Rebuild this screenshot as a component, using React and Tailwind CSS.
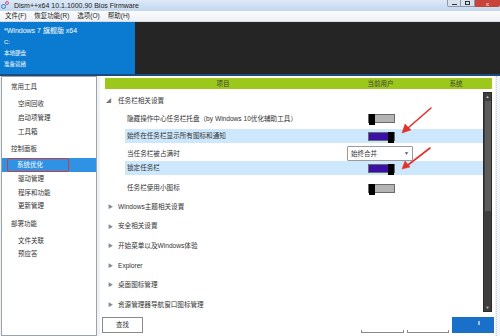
import React from "react";

const font = "font-['Liberation_Sans','Noto_Sans_CJK_SC',sans-serif]";

const Toggle = ({ on }) => (
  <div
    className={`flex h-[9px] w-[27px] border border-[#6a6a6a] ${
      on ? "justify-end bg-[#3a10a6]" : "justify-start bg-[#b4b4b4]"
    }`}
  >
    <div className="-my-[1px] h-[11px] w-[6px] bg-black" />
  </div>
);

const SideItem = ({ h, sub, children }) => (
  <div
    className={`flex items-center ${h} ${sub ? "pl-[16px]" : "pl-[9px]"} text-[6.5px] text-[#333]`}
  >
    {children}
  </div>
);

const groups = [
  "Windows主题相关设置",
  "安全相关设置",
  "开始菜单以及Windows体验",
  "Explorer",
  "桌面图标管理",
  "资源管理器导航窗口图标管理",
];

export default function App() {
  return (
    <div className={`flex h-[336px] w-[500px] flex-col overflow-hidden bg-white ${font}`}>
      {/* title bar */}
      <div className="flex h-[11px] items-start bg-gradient-to-b from-[#dce9f7] to-[#c4d7ed]">
        <div className="relative ml-[1px] mt-[1px] h-[9px] w-[10px]">
          <div className="absolute left-0 top-[3px] h-[5px] w-[5px] rounded-full border-[1.5px] border-[#2a7fd0]" />
          <div className="absolute left-[4px] top-0 h-[4px] w-[4px] rounded-full border-[1.5px] border-[#d0508a]" />
        </div>
        <span className="ml-[3px] mt-[1px] text-[7px] leading-[9px] text-[#222]">
          Dism++x64 10.1.1000.90 Bios Firmware
        </span>
        <div className="ml-auto flex h-[7px]">
          <div className="flex w-[14px] items-center justify-center rounded-bl-[2px] border border-t-0 border-[#8a98a8] bg-[#d8e2ee]">
            <div className="mt-[2px] h-[1px] w-[5px] bg-[#333]" />
          </div>
          <div className="flex w-[14px] items-center justify-center border border-l-0 border-t-0 border-[#8a98a8] bg-[#d8e2ee]">
            <div className="h-[4px] w-[5px] border border-[#333]" />
          </div>
          <div className="flex w-[25px] items-center justify-center rounded-br-[2px] bg-[#c8443a] text-[6px] leading-none text-white">
            x
          </div>
        </div>
      </div>

      {/* menu bar */}
      <div className="flex h-[11px] items-center gap-[8px] border-b border-[#d6dde6] bg-gradient-to-b from-[#fbfcfd] to-[#eef1f5] pl-[5px] text-[6.5px] text-[#222]">
        <span>文件(F)</span>
        <span>恢复功能(R)</span>
        <span>选项(O)</span>
        <span>帮助(H)</span>
      </div>

      {/* header */}
      <div className="flex h-[54px] border-b-2 border-[#1a4b7c]">
        <div className="flex w-[135px] flex-col bg-[#0b7bd1] pl-[4px] pt-[4px] text-white">
          <div className="flex h-[11px] items-center text-[7px]">*Windows 7 旗舰版 x64</div>
          <div className="flex h-[11px] items-center text-[6px]">C:</div>
          <div className="flex h-[11px] items-center text-[5.5px]">本地硬盘</div>
          <div className="flex h-[11px] items-center text-[5.5px]">准备就绪</div>
        </div>
        <div className="flex-1 bg-[#252525]" />
      </div>

      {/* body */}
      <div className="flex flex-1 bg-[#f2f2f2]">
        {/* sidebar */}
        <div className="ml-[1px] flex w-[96px] flex-col border border-[#9aa3ad] bg-white">
          <SideItem h="h-[20px]">常用工具</SideItem>
          <SideItem h="h-[14px]" sub>空间回收</SideItem>
          <SideItem h="h-[13px]" sub>启动项管理</SideItem>
          <SideItem h="h-[16px]" sub>工具箱</SideItem>
          <SideItem h="h-[18px]">控制面板</SideItem>
          <div className="flex h-[14px] items-center bg-[#2f92e4] pl-[5px]">
            <div className="flex h-[14px] w-[62px] items-center rounded-[2px] border-[1.5px] border-[#d23a3a] pl-[9px] text-[6.5px] text-white">
              系统优化
            </div>
          </div>
          <SideItem h="h-[14px]" sub>驱动管理</SideItem>
          <SideItem h="h-[13px]" sub>程序和功能</SideItem>
          <SideItem h="h-[14px]" sub>更新管理</SideItem>
          <SideItem h="h-[21px]">部署功能</SideItem>
          <SideItem h="h-[13px]" sub>文件关联</SideItem>
          <SideItem h="h-[14px]" sub>预应答</SideItem>
        </div>

        {/* main */}
        <div className="relative ml-[3px] flex w-[395px] flex-col bg-white">
          <div className="ml-[5px] mt-[2px] flex h-[11px] w-[387px] items-center bg-[#9cc81c] text-[6.5px] text-[#3c3c3c]">
            <span className="w-[236px] text-center">项目</span>
            <span className="w-[79px] text-center">当前用户</span>
            <span className="w-[72px] text-center">系统</span>
          </div>

          <div className="mt-[3px] flex h-[220px]">
            <div className="flex w-[383px] flex-col overflow-hidden text-[6.6px] text-[#333]">
              <div className="flex h-[18px] shrink-0 items-center pl-[6px]">
                <span className="w-[12px] text-[5px] text-[#777]">◢</span>
                <span>任务栏相关设置</span>
              </div>
              <div className="flex h-[17px] shrink-0 items-center pl-[25px]">
                <span className="w-[243px] pl-[2px]">隐藏操作中心任务栏托盘（by Windows 10优化辅助工具）</span>
                <Toggle />
              </div>
              <div className="ml-[25px] mt-[2px] flex h-[14px] shrink-0 items-center bg-[#cde8fc]">
                <span className="w-[243px] pl-[2px]">始终在任务栏显示所有图标和通知</span>
                <Toggle on />
              </div>
              <div className="flex h-[18px] shrink-0 items-center pl-[25px] pt-[3px]">
                <span className="w-[222px] pl-[2px]">当任务栏被占满时</span>
                <div className="flex h-[15px] w-[66px] items-center justify-between rounded-[1px] border border-[#9a9a9a] bg-white pl-[3px] pr-[3px] text-[6.5px]">
                  <span>始终合并</span>
                  <span className="text-[5px] text-[#555]">▼</span>
                </div>
              </div>
              <div className="ml-[25px] flex h-[14px] shrink-0 items-center bg-[#cde8fc]">
                <span className="w-[243px] pl-[2px]">锁定任务栏</span>
                <Toggle on />
              </div>
              <div className="flex h-[22px] shrink-0 items-center pl-[25px] pt-[4px]">
                <span className="w-[243px] pl-[2px]">任务栏使用小图标</span>
                <Toggle />
              </div>
              {groups.map((g) => (
                <div key={g} className="flex h-[19.6px] shrink-0 items-center pl-[8px]">
                  <span className="w-[10px] text-[5px] text-[#888]">▶</span>
                  <span>{g}</span>
                </div>
              ))}
            </div>
            {/* scrollbar */}
            <div className="flex w-[9px] flex-col items-center border border-[#2a2a2a] bg-[#3e3e3e]">
              <span className="mt-[1px] text-[4px] leading-[5px] text-[#cfcfcf]">▲</span>
              <div className="mt-[2px] h-[110px] w-[6px] bg-[#5c5c5c]" />
              <span className="mb-[1px] mt-auto text-[4px] leading-[5px] text-[#cfcfcf]">▼</span>
            </div>
          </div>

          {/* bottom buttons */}
          <div className="flex flex-1 items-start pt-[5px]">
            <div className="ml-[2px] flex h-[16px] w-[41px] items-center justify-center border border-[#8a8a8a] bg-white text-[6.5px] text-[#333]">
              查找
            </div>
            <div className="ml-auto mt-[13px] h-[3px] w-[43px] border-x border-b border-[#8a8a8a]" />
            <div className="ml-[3px] mt-[13px] h-[3px] w-[42px] border-x border-b border-[#8a8a8a]" />
            <div className="ml-[3px] flex h-[16px] w-[42px] items-start justify-end bg-[#1a6fc9] pr-[14px] pt-[4px]">
              <div className="h-[4px] w-[2px] bg-[#9cc4ee]" />
            </div>
            <div className="w-[1px]" />
          </div>

          {/* annotation arrows */}
          <svg className="pointer-events-none absolute left-0 top-0" width="395" height="260" viewBox="0 0 395 260">
            <g transform="translate(-100,-76)" fill="#e3322b" stroke="#e3322b">
              <line x1="431" y1="108" x2="408" y2="128" strokeWidth="1.6" strokeLinecap="round" />
              <polygon points="402,133 405,124 411,130" strokeWidth="0.5" />
              <line x1="430" y1="148" x2="408" y2="165" strokeWidth="1.6" strokeLinecap="round" />
              <polygon points="402,169 405,161 410,167" strokeWidth="0.5" />
            </g>
          </svg>
        </div>

        <div className="ml-[1px] flex-1 border-l border-dotted border-[#c9cfd8] bg-[#f1f4f8]" />
      </div>
    </div>
  );
}
